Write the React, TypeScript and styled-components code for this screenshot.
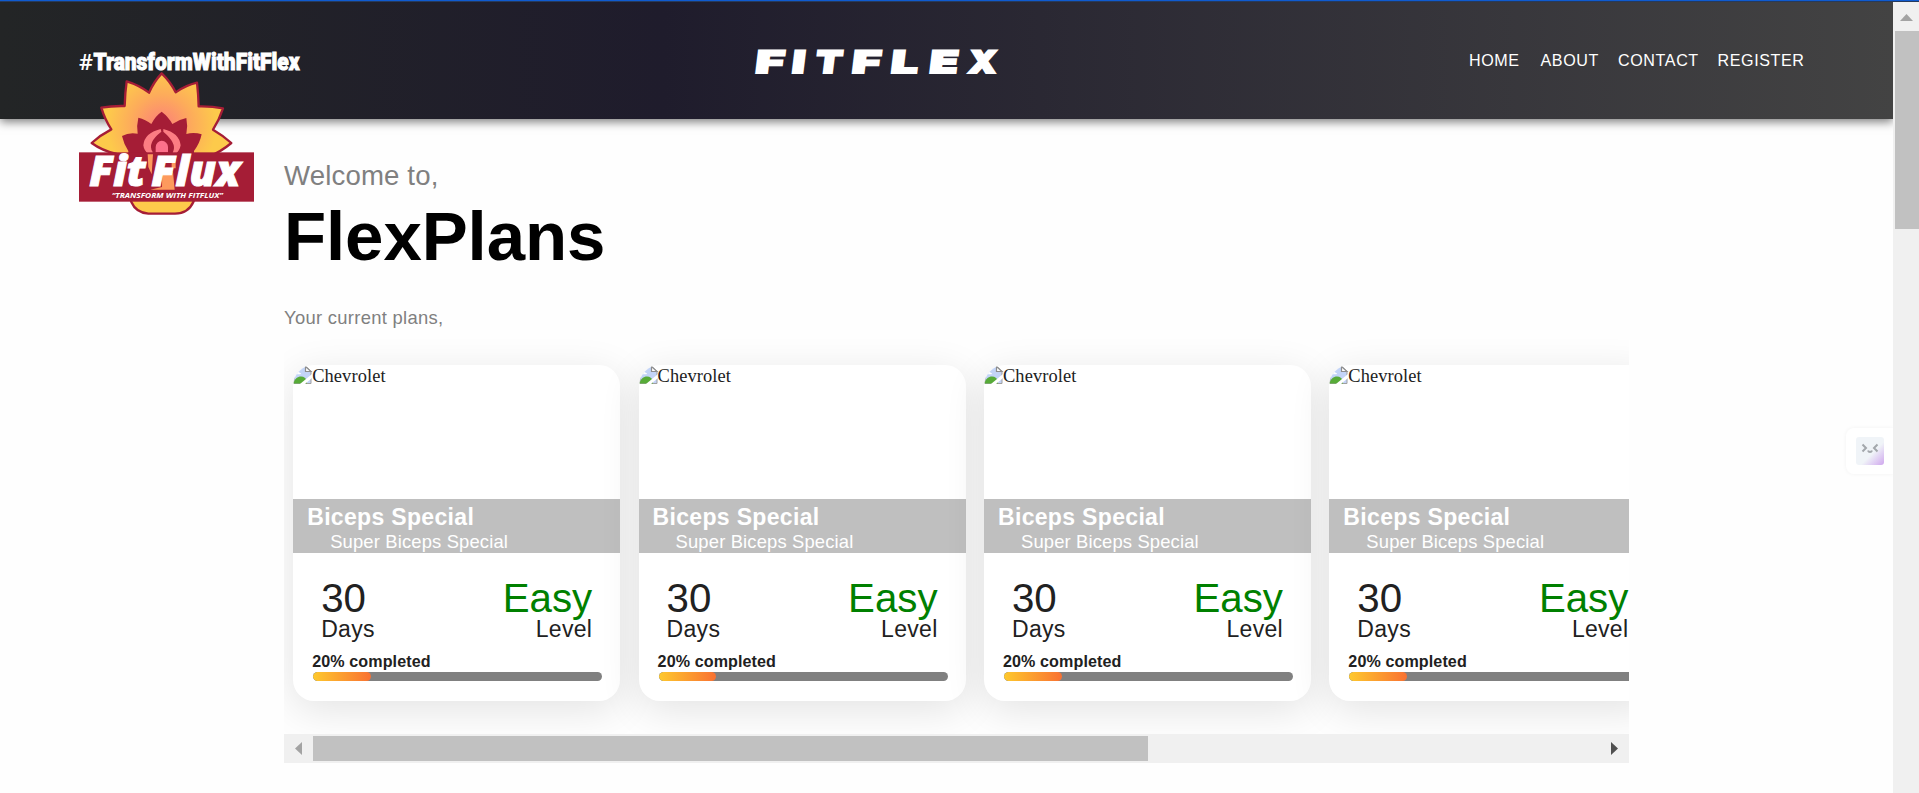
import React from "react";
import styled, { createGlobalStyle } from "styled-components";

const GlobalStyle = createGlobalStyle`
  * { box-sizing: border-box; }
  html, body { margin: 0; padding: 0; overflow: hidden; background: #fefefe; }
  body { font-family: "Liberation Sans", Arial, sans-serif; }
  svg { overflow: visible; }
`;

const Page = styled.div`
  display: flex;
  flex-direction: column;
  width: 1919px;
  height: 793px;
  overflow: hidden;
`;

const TopLine = styled.div`
  flex: none;
  height: 2px;
  background: linear-gradient(#0f5bd0 50%, #263a5c 50%);
`;

const Viewport = styled.div`
  display: flex;
  flex: 1;
  min-height: 0;
`;

const Main = styled.main`
  position: relative;
  width: 1893px;
  overflow: hidden;
  background: #fefefe;
`;

const Header = styled.header`
  display: flex;
  align-items: flex-start;
  height: 117px;
  padding-left: 79px;
  background: linear-gradient(to right, #232526 0%, #1f1c2c 35%, #434343 100%);
  box-shadow: 0 3px 9px rgba(0, 0, 0, 0.5);
`;

const Hashtag = styled.div`
  width: 675px;
  padding-top: 44px;
`;

const Nav = styled.nav`
  display: flex;
  margin-left: 469px;
  padding-top: 48px;
`;

const NavLink = styled.a<{ $width: number }>`
  width: ${(p) => p.$width}px;
  font-size: 16.1px;
  line-height: 20px;
  letter-spacing: 0.6px;
  color: #fff;
  white-space: nowrap;
`;

const WordmarkSlot = styled.div`
  padding-top: 43px;
`;

const BrandBadge = styled.div`
  position: absolute;
  left: 79px;
  top: 69.7px;
  line-height: 0;
`;

const Content = styled.section`
  width: 1345px;
  margin-left: 284px;
  padding-top: 41px;
`;

const Welcome = styled.p`
  margin: 0;
  font-size: 27.6px;
  line-height: 32px;
  letter-spacing: 0.15px;
  color: #808080;
`;

const Title = styled.h1`
  margin: 5px 0 0;
  font-size: 69px;
  line-height: 80px;
  letter-spacing: -0.1px;
  color: #000;
`;

const Lead = styled.p`
  margin: 30px 0 0;
  font-size: 18.4px;
  line-height: 22px;
  letter-spacing: 0.3px;
  color: #808080;
`;

const Scroller = styled.div`
  display: flex;
  gap: 18.4px;
  height: 405px;
  padding: 36px 0 33px 9.2px;
  overflow: hidden;
`;

const Card = styled.article`
  flex: none;
  width: 327px;
  height: 336px;
  border-radius: 21px;
  overflow: hidden;
  background: #fff;
  color: #212121;
  box-shadow: 0 9px 40px rgba(0, 0, 0, 0.11);
`;

const Picture = styled.div`
  display: flex;
  align-items: flex-start;
  height: 134px;
  font: 18.4px/22px "Liberation Serif", "Times New Roman", serif;
  letter-spacing: 0.1px;
`;

const Caption = styled.div`
  height: 54px;
  background: #bfbfbf;
  color: #fff;
`;

const PlanName = styled.h2`
  margin: 0;
  padding: 5px 0 0 14px;
  font-size: 23px;
  line-height: 26px;
  letter-spacing: 0.33px;
`;

const PlanDetail = styled.p`
  margin: 0;
  padding-left: 37px;
  font-size: 18.4px;
  line-height: 23px;
  letter-spacing: 0.15px;
`;

const Stats = styled.div`
  display: flex;
  justify-content: space-between;
  padding: 26px 28px 0 28px;
`;

const Stat = styled.div<{ $end?: boolean }>`
  text-align: ${(p) => (p.$end ? "right" : "left")};
`;

const StatValue = styled.div<{ $color?: string }>`
  font-size: 40.25px;
  line-height: 39px;
  color: ${(p) => p.$color ?? "inherit"};
`;

const StatLabel = styled.div`
  font-size: 23px;
  line-height: 23px;
  letter-spacing: 0.3px;
`;

const Progress = styled.div`
  padding: 10px 18px 0 19px;
  font-size: 16.1px;
  font-weight: 700;
  line-height: 20px;
  letter-spacing: 0.1px;
`;

const Track = styled.div`
  height: 9px;
  margin: 1px 0 0 1px;
  border-radius: 5px;
  overflow: hidden;
  background: #808080;
`;

const Fill = styled.div`
  height: 9px;
  border-radius: 5px;
  background: linear-gradient(to right, #fec92d, #f97132);
`;

const HScroll = styled.div`
  display: flex;
  align-items: center;
  height: 29px;
  padding: 0 11px;
  background: #f0f0f0;
`;

const HThumb = styled.div`
  width: 835px;
  height: 25px;
  margin: 0 auto 0 11px;
  background: #c1c1c1;
`;

const VScroll = styled.div`
  display: flex;
  flex-direction: column;
  align-items: center;
  width: 26px;
  padding: 12px 0 0 0;
  background: #f0f0f0;
`;

const VThumb = styled.div`
  align-self: flex-end;
  width: 24px;
  height: 198px;
  margin-top: 10px;
  background: #c1c1c1;
`;

const Assistant = styled.div`
  position: absolute;
  right: 0;
  top: 426px;
  display: flex;
  align-items: center;
  width: 47px;
  height: 46px;
  padding-left: 10px;
  border-radius: 8px 0 0 8px;
  background: #fff;
  box-shadow: 0 0 4px rgba(0, 0, 0, 0.05);
`;

const Face = styled.div`
  width: 28px;
  height: 28px;
  border-radius: 3px;
  background: linear-gradient(135deg, #f0f4f8 58%, #cfa6ee 100%);
  line-height: 0;
`;

const BrokenImage = () => (
  <svg width="19" height="19" viewBox="0 0 19 19">
    <path d="M1 1.500h12l5 5v12H1z" fill="#c3d4f7" stroke="#a0a0a0" strokeWidth="1" />
    <path d="M12.500 1.500v5H18z" fill="#fff" stroke="#8d8d8d" strokeWidth="1.200" />
    <path d="M3 8.500c0-2 3-2.500 3.500-.8 1.500 0 2 1.600.8 1.600H4z" fill="#fff" />
    <path d="M.5 18.500c1-4.500 4-7 7.500-7 3 0 5 2 6 4v3z" fill="#57ab38" />
    <path d="M7 19L19 9v4L12 19z" fill="#fff" />
  </svg>
);

const Wordmark = () => (
  <svg width="246" height="32" viewBox="0 0 246 32">
    <g
      transform="skewX(-7)"
      fill="#fff"
      stroke="#fff"
      strokeWidth="2"
      fontFamily="Inter, sans-serif"
      fontWeight="900"
      fontSize="31"
    >
      {[
        ["F", 4, 28.5],
        ["I", 40.5, 13],
        ["T", 64, 26.5],
        ["F", 100.5, 28.5],
        ["L", 139.5, 27],
        ["E", 178, 28.5],
        ["X", 217, 28],
      ].map(([ch, x, w], i) => (
        <text key={i} x={x} y="27.500" textLength={w} lengthAdjust="spacingAndGlyphs">
          {ch}
        </text>
      ))}
    </g>
  </svg>
);

const HashtagText = () => (
  <svg width="224" height="32" viewBox="0 0 224 32" fill="#fff">
    <text x="0" y="23.500" fontFamily="Open Sans" fontSize="22" fontWeight="600" textLength="14" lengthAdjust="spacingAndGlyphs">#</text>
    <text
      x="14.500"
      y="23.500"
      fontFamily="Roboto, sans-serif"
      fontSize="24"
      fontWeight="900"
      stroke="#fff"
      strokeWidth="1"
      textLength="206"
      lengthAdjust="spacingAndGlyphs"
    >
      TransformWithFitFlex
    </text>
  </svg>
);

const Badge = () => (
  <svg width="175" height="146.700" viewBox="57 125 525 440">
    <defs>
      <radialGradient id="petal" gradientUnits="userSpaceOnUse" cx="305" cy="285" r="165">
        <stop offset="0.150" stopColor="#fc8a72" />
        <stop offset="0.550" stopColor="#fdab5b" />
        <stop offset="1" stopColor="#fdca4b" />
      </radialGradient>
    </defs>
    <path
      d="M305 129Q332 155 347 186Q377 165 411 157Q415 193 416 228Q454 227 489 234Q478 268 459 298Q490 316 514 338Q483 364 445 380L400 515Q385 549 345 550H265Q228 547 214 515L170 371Q126 361 95 338Q121 314 154 297Q134 267 124 232Q157 226 194 227Q195 188 200 153Q237 164 267 187Q281 155 305 129Z"
      fill="url(#petal)"
      stroke="#a51d36"
      strokeWidth="7"
      strokeLinejoin="round"
    />
    <path
      d="M305 244Q326 260 337 281Q358 267 379 263Q384 287 379 311Q402 305 425 312Q419 340 402 362V400H205V362Q191 340 186 317Q207 305 233 310Q229 287 235 262Q257 267 274 281Q286 257 305 244Z"
      fill="#a51d36"
    />
    <path d="M302 296Q253 308 250 345Q252 361 265 371V412L278 435Q272 391 278 365Q260 338 304 304Z" fill="#fc7d83" />
    <path d="M310 296Q358 308 362 345Q359 361 347 371V390L334 382Q336 373 340 362Q350 338 310 304Z" fill="#fc7d83" />
    <path d="M287 366V350a18.500 18.500 0 0 1 37 0V366z" fill="#fd718b" />
    <rect x="57" y="366" width="525" height="148" fill="#a51d36" />
    <path d="M263 372h16l-4 60-10-22zM335 378h12v36h-12zM307 424h32l5 54h-73l35-8z" fill="#fd9a5d" />
    <g fill="#fff" fontFamily="Open Sans, sans-serif" fontStyle="italic" fontWeight="800" stroke="#fff" strokeWidth="3">
      <text x="88" y="467" fontSize="126" textLength="170" lengthAdjust="spacingAndGlyphs">Fit</text>
      <text x="274" y="467" fontSize="126" textLength="266" lengthAdjust="spacingAndGlyphs">Flux</text>
    </g>
    <text
      x="155"
      y="504"
      fill="#fff"
      fontFamily="Open Sans, sans-serif"
      fontStyle="italic"
      fontWeight="700"
      fontSize="23"
      textLength="334"
      lengthAdjust="spacingAndGlyphs"
    >
      “TRANSFORM WITH FITFLUX”
    </text>
  </svg>
);

const FaceIcon = () => (
  <svg width="28" height="28" viewBox="0 0 28 28" fill="none" stroke="#a3a7ac" strokeWidth="2">
    <path d="M6.500 7.500l3.500 3.500-3.500 3.500M21.500 7.500L18 11l3.500 3.500M12 13.500q.5 1.500 2 1.500t2-1.500" />
  </svg>
);

const Arrow = ({ dir }: { dir: "up" | "left" | "right" }) => {
  if (dir === "up")
    return (
      <svg width="13" height="7" viewBox="0 0 13 7">
        <path d="M0 7L6.500 0L13 7z" fill="#a3a3a3" />
      </svg>
    );
  return (
    <svg width="7" height="13" viewBox="0 0 7 13">
      {dir === "left" ? <path d="M7 0L0 6.500L7 13z" fill="#a3a3a3" /> : <path d="M0 0L7 6.500L0 13z" fill="#505050" />}
    </svg>
  );
};

const links = [
  { label: "HOME", width: 71.5 },
  { label: "ABOUT", width: 77.5 },
  { label: "CONTACT", width: 99.5 },
  { label: "REGISTER", width: 90 },
];

const plan = {
  alt: "Chevrolet",
  name: "Biceps Special",
  detail: "Super Biceps Special",
  days: 30,
  level: "Easy",
  completed: 20,
};
const plans = [plan, plan, plan, plan];

export default function App() {
  return (
    <Page>
      <GlobalStyle />
      <TopLine />
      <Viewport>
        <Main>
          <Header>
            <Hashtag>
              <HashtagText />
            </Hashtag>
            <WordmarkSlot>
              <Wordmark />
            </WordmarkSlot>
            <Nav>
              {links.map((l) => (
                <NavLink key={l.label} $width={l.width}>
                  {l.label}
                </NavLink>
              ))}
            </Nav>
          </Header>
          <BrandBadge>
            <Badge />
          </BrandBadge>
          <Content>
            <Welcome>Welcome to,</Welcome>
            <Title>FlexPlans</Title>
            <Lead>Your current plans,</Lead>
            <Scroller>
              {plans.map((p, i) => (
                <Card key={i}>
                  <Picture>
                    <BrokenImage />
                    {p.alt}
                  </Picture>
                  <Caption>
                    <PlanName>{p.name}</PlanName>
                    <PlanDetail>{p.detail}</PlanDetail>
                  </Caption>
                  <Stats>
                    <Stat>
                      <StatValue>{p.days}</StatValue>
                      <StatLabel>Days</StatLabel>
                    </Stat>
                    <Stat $end>
                      <StatValue $color="#008000">{p.level}</StatValue>
                      <StatLabel>Level</StatLabel>
                    </Stat>
                  </Stats>
                  <Progress>
                    {p.completed}% completed
                    <Track>
                      <Fill style={{ width: `${p.completed}%` }} />
                    </Track>
                  </Progress>
                </Card>
              ))}
            </Scroller>
            <HScroll>
              <Arrow dir="left" />
              <HThumb />
              <Arrow dir="right" />
            </HScroll>
          </Content>
          <Assistant>
            <Face>
              <FaceIcon />
            </Face>
          </Assistant>
        </Main>
        <VScroll>
          <Arrow dir="up" />
          <VThumb />
        </VScroll>
      </Viewport>
    </Page>
  );
}
